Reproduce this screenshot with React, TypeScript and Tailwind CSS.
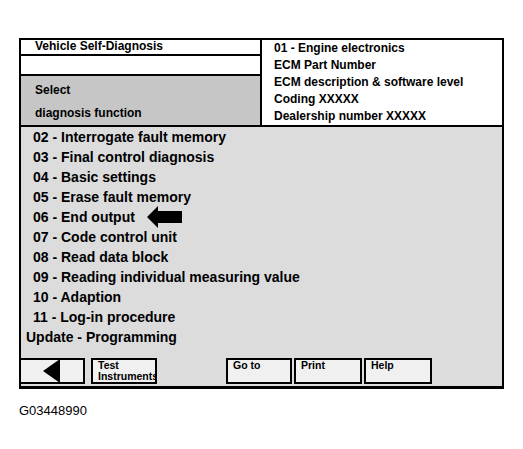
import React from 'react';

const items = [
  '02 - Interrogate fault memory',
  '03 - Final control diagnosis',
  '04 - Basic settings',
  '05 - Erase fault memory',
  '06 - End output',
  '07 - Code control unit',
  '08 - Read data block',
  '09 - Reading individual measuring value',
  '10 - Adaption',
  '11 - Log-in procedure',
];

const info = [
  '01 - Engine electronics',
  'ECM Part Number',
  'ECM description & software level',
  'Coding XXXXX',
  'Dealership number XXXXX',
];

function Arrow() {
  return (
    <svg width="36" height="22" viewBox="0 0 36 22" className="ml-[12px]">
      <path d="M0 11 L11 0 L11 5 L35 5 L35 17 L11 17 L11 22 Z" fill="#000" />
    </svg>
  );
}

function Btn({ label, w }: { label: React.ReactNode; w: string }) {
  return (
    <div className={`${w} h-[26px] overflow-hidden border-2 border-black bg-[#f0f0f0] pl-[5px] text-[10.5px] font-bold leading-[11px] text-black`}>
      {label}
    </div>
  );
}

export default function App() {
  return (
    <div className="min-h-[449px] w-[523px] bg-white pt-[38px] pl-[19px]" style={{ fontFamily: '"Liberation Sans", Arial, sans-serif' }}>
      <div className="w-[485px] border-2 border-b-[3px] border-black bg-[#dcdcdc]">
        {/* Header */}
        <div className="flex h-[87px] border-b-2 border-black">
          <div className="flex w-[241px] flex-col border-r-2 border-black">
            <div className="h-[16px] border-b-2 border-black bg-white pl-[14px] text-[12px] font-bold leading-[13px] text-black">
              Vehicle Self-Diagnosis
            </div>
            <div className="h-[20px] border-b-2 border-black bg-white" />
            <div className="flex flex-1 flex-col bg-[#c6c6c6] pl-[14px] pt-[4px] text-[12px] font-bold text-black">
              <div className="leading-[20px]">Select</div>
              <div className="mt-[3px] leading-[20px]">diagnosis function</div>
            </div>
          </div>
          <div className="flex flex-1 flex-col bg-white pl-[12px] text-[12px] font-bold text-black">
            {info.map((t) => (
              <div key={t} className="h-[17px] leading-[17px]">{t}</div>
            ))}
          </div>
        </div>

        {/* Menu list */}
        <div className="flex flex-col text-[14px] font-bold text-black">
          {items.map((t, i) => (
            <div key={t} className="flex h-[20px] items-center pl-[12px] leading-[20px]">
              {t}
              {i === 4 && <Arrow />}
            </div>
          ))}
          <div className="flex h-[20px] items-center pl-[5px] leading-[20px]">Update - Programming</div>
        </div>

        {/* Buttons */}
        <div className="mt-[11px] mb-[2px] flex items-start">
          <div className="flex h-[26px] w-[64px] items-center border-2 border-l-0 border-black bg-[#f0f0f0] pl-[22px]">
            <svg width="17" height="24" viewBox="0 0 17 24">
              <path d="M17 0 L0 12 L17 24 Z" fill="#000" />
            </svg>
          </div>
          <div className="ml-[6px]">
            <Btn w="w-[66px]" label={<><div>Test</div><div>Instruments</div></>} />
          </div>
          <div className="ml-[69px] flex gap-[2px]">
            <Btn w="w-[66px]" label="Go to" />
            <Btn w="w-[68px]" label="Print" />
            <Btn w="w-[68px]" label="Help" />
          </div>
        </div>
      </div>
      <div className="mt-[14px] text-[13px] leading-[16px] text-black">G03448990</div>
    </div>
  );
}
